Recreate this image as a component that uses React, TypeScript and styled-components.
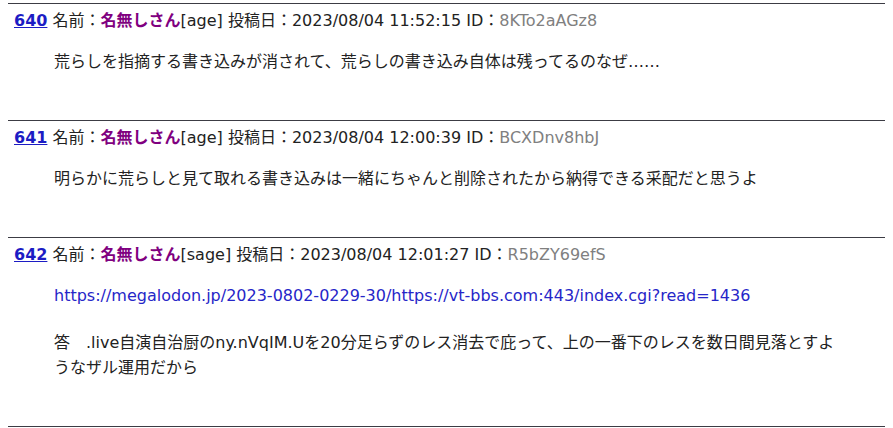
import React, { FC } from "react";
import styled, { createGlobalStyle } from "styled-components";

interface Post {
  no: number;
  mail: string;
  date: string;
  id: string;
  lines: string[];
  url?: string;
}

const posts: Post[] = [
  {
    no: 640,
    mail: "age",
    date: "2023/08/04 11:52:15",
    id: "8KTo2aAGz8",
    lines: ["荒らしを指摘する書き込みが消されて、荒らしの書き込み自体は残ってるのなぜ……"],
  },
  {
    no: 641,
    mail: "age",
    date: "2023/08/04 12:00:39",
    id: "BCXDnv8hbJ",
    lines: ["明らかに荒らしと見て取れる書き込みは一緒にちゃんと削除されたから納得できる采配だと思うよ"],
  },
  {
    no: 642,
    mail: "sage",
    date: "2023/08/04 12:01:27",
    id: "R5bZY69efS",
    url: "https://megalodon.jp/2023-0802-0229-30/https://vt-bbs.com:443/index.cgi?read=1436",
    lines: [
      "答　.live自演自治厨のny.nVqIM.Uを20分足らずのレス消去で庇って、上の一番下のレスを数日間見落とすようなザル運用だから",
    ],
  },
];

const GlobalStyle = createGlobalStyle`
  body {
    margin: 3px 8px 0;
    background: #fff;
    font-family: "DejaVu Sans", "Noto Sans CJK JP", sans-serif;
    font-size: 16px;
    color: #222;
  }
`;

export default function App() {
  return (
    <>
      <GlobalStyle />
      <Thread>
        {posts.map((p) => (
          <PostItem key={p.no} post={p} />
        ))}
        <Rule />
      </Thread>
    </>
  );
}

const PostItem: FC<{ post: Post }> = ({ post }) => (
  <Res>
    <Header>
      <No href="#">{post.no}</No> 名前：<Name>名無しさん</Name>[{post.mail}] 投稿日：{post.date} ID：
      <Id>{post.id}</Id>
    </Header>
    <Body>
      {post.url && <Url href="#">{post.url}</Url>}
      {post.lines.map((l, i) => (
        <Line key={i} $afterUrl={!!post.url}>
          {l}
        </Line>
      ))}
    </Body>
  </Res>
);

const Thread = styled.div`
  display: flex;
  flex-direction: column;
`;

const Res = styled.section`
  border-top: 1px solid #3c3c44;
  padding: 4px 0 46px;
`;

const Rule = styled.div`
  border-top: 1px solid #3c3c44;
`;

const Header = styled.div`
  padding-left: 6px;
  line-height: 25px;
  white-space: nowrap;
`;

const No = styled.a`
  color: #1c1cc4;
  font-weight: bold;
  text-decoration: underline;
`;

const Name = styled.b`
  color: #800080;
`;

const Id = styled.span`
  color: #808080;
`;

const Body = styled.div`
  margin: 16px 40px 0 46px;
  line-height: 25px;
`;

const Url = styled.a`
  display: block;
  color: #2626c8;
  text-decoration: none;
`;

const Line = styled.div<{ $afterUrl: boolean }>`
  margin-top: ${(p) => (p.$afterUrl ? "22px" : "0")};
`;
